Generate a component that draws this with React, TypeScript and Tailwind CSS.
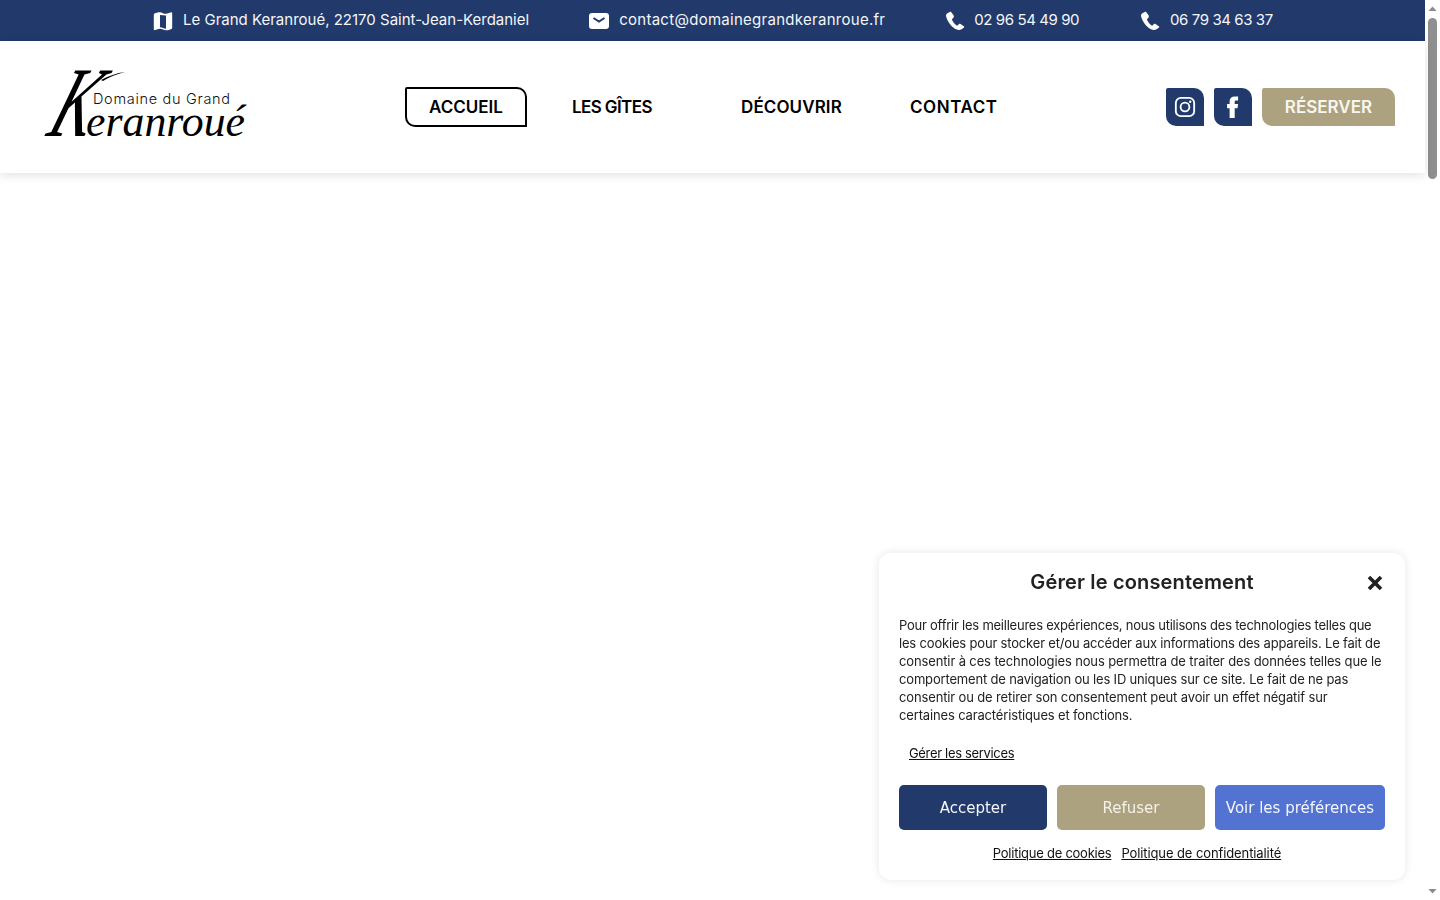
const sans = "font-['Inter','Liberation_Sans',sans-serif]";

function MapIcon() {
  return (
    <svg width="20" height="20" viewBox="0 0 20 20" fill="#fff" className="shrink-0">
      <path fillRule="evenodd" d="M1.500 2.600C3.500 1.600 5.500 1 7 1.200c2 .3 4 1.800 6 1.600 2-.2 3.500-1 5-1.500.600-.2 1.200.2 1.200.9v14.600c0 .6-.3 1-.8 1.200-1.900.9-3.900 1.500-5.400 1.300-2-.3-4-1.700-6-1.600-1.800.1-3.400.9-5 1.400-.6.200-1.200-.2-1.200-.9V3.700c0-.5.2-.9.700-1.100zM7 4v12.300c2 .2 4 1.200 6 1.500V4.600C11 4.400 9 4 7 4z" />
    </svg>
  );
}

function MailIcon() {
  return (
    <svg width="20" height="16" viewBox="0 0 20 16" className="shrink-0">
      <rect x="0" y="0" width="20" height="16" rx="3" fill="#fff" />
      <path d="M4.500 5l5.500 3.600L15.500 5" fill="none" stroke="#213a6b" strokeWidth="2" />
    </svg>
  );
}

function PhoneIcon() {
  return (
    <svg width="20" height="20" viewBox="0 0 20 20" fill="#fff" className="shrink-0">
      <path d="M4.800 1 2 2.600C1 3.300.8 4.600 1.300 6.300c1.100 3.400 3 6.500 5.500 9 1.800 1.700 4.300 3.400 6.800 3.700 2 .2 3.500-.8 5.400-2.500.4-.5.200-1-.2-1.300l-3.300-2.300c-.6-.4-1.100-.3-1.600.2l-1 1.200c-.4.300-.8.400-1.300.1-2.100-1.400-3.500-3.300-4.500-5.500-.2-.5-.1-.8.300-1.100l1.100-1C8.900 5.400 9 5 8.700 4.400L6.300 1.300C5.900.800 5.300.7 4.800 1z" />
    </svg>
  );
}

function TopItem({ icon, text, cls }: { icon: React.ReactNode; text: string; cls: string }) {
  return (
    <div className={`flex items-center ${cls}`}>
      {icon}
      <span className="whitespace-nowrap text-[15px] text-[#f4f6fa]">{text}</span>
    </div>
  );
}

function Logo() {
  return (
    <svg width="200" height="72" viewBox="0 0 200 72" className="shrink-0 overflow-visible">
      <text transform="translate(0 65) skewX(-20) scale(0.62 1)" fontFamily="'Liberation Serif', serif" fontStyle="italic" fontSize="100" fill="#000">K</text>
      <path d="M56 9C63 5 72 2 80 1 72 3 64 6 58 10z" fill="#000" />
      <text x="48" y="33" fontFamily="Inter, 'Liberation Sans', sans-serif" fontWeight="300" fontSize="14.500" fill="#111" textLength="137">Domaine du Grand</text>
      <text x="41" y="65" fontFamily="'Liberation Serif', serif" fontStyle="italic" fontSize="45" fill="#000" textLength="159" lengthAdjust="spacingAndGlyphs">eranroué</text>
    </svg>
  );
}

function InstagramIcon() {
  return (
    <svg width="22" height="22" viewBox="0 0 24 24" fill="none" stroke="#fff">
      <rect x="2" y="2" width="20" height="20" rx="5.500" strokeWidth="2" />
      <circle cx="12" cy="12" r="4.800" strokeWidth="2" />
      <circle cx="17.700" cy="6.300" r="1.300" fill="#fff" stroke="none" />
    </svg>
  );
}

function FacebookIcon() {
  return (
    <svg width="12" height="22" viewBox="0 0 14 26" fill="#fff">
      <path d="M3 26V14.500H0V9.500H3V6.200C3 2.400 5.500.5 9 .5c1.500 0 3 .1 4 .2v4.500h-2.500C9.300 5.200 9 6 9 7v2.500h4l-.7 5H9V26z" />
    </svg>
  );
}

function Scrollbar() {
  return (
    <div className="flex h-[900px] w-[15px] shrink-0 flex-col items-center bg-white">
      <svg width="15" height="18" viewBox="0 0 15 18" className="shrink-0">
        <path d="M3.500 11L7.500 6.500 11.500 11z" fill="#8a8a8a" />
      </svg>
      <div className="h-[161px] w-[9px] shrink-0 rounded-[5px] bg-[#8f8f8f]" />
      <div className="flex-1" />
      <svg width="15" height="18" viewBox="0 0 15 18" className="shrink-0">
        <path d="M3.500 7L7.500 11.500 11.500 7z" fill="#8a8a8a" />
      </svg>
    </div>
  );
}

function ConsentButton({ label, cls }: { label: string; cls: string }) {
  return (
    <button className={`flex h-[45px] items-center justify-center rounded-[5px] pt-[2px] font-['DejaVu_Sans',sans-serif] text-[15px] ${cls}`}>
      {label}
    </button>
  );
}

function Consent() {
  return (
    <div className={`${sans} fixed bottom-[20px] left-[879px] flex h-[327px] w-[526px] flex-col rounded-[12px] bg-white px-[20px] shadow-[0_0_10px_rgba(0,0,0,0.1)]`}>
      <div className="relative flex h-[60px] shrink-0 items-center justify-center pb-[2px]">
        <span className="text-[20px] font-semibold tracking-[0.15px] text-[#222]">Gérer le consentement</span>
        <svg width="16" height="16" viewBox="0 0 16 16" className="absolute right-[2px] top-[22px]">
          <path d="M2 2l12 12M14 2L2 14" stroke="#222" strokeWidth="3.600" />
        </svg>
      </div>
      <div className="mt-[3px] shrink-0 whitespace-nowrap text-[13px] leading-[18px] text-[#222]">
        <p className="tracking-[-0.24px]">Pour offrir les meilleures expériences, nous utilisons des technologies telles que</p>
        <p className="tracking-[-0.18px]">les cookies pour stocker et/ou accéder aux informations des appareils. Le fait de</p>
        <p className="tracking-[-0.13px]">consentir à ces technologies nous permettra de traiter des données telles que le</p>
        <p className="tracking-[-0.17px]">comportement de navigation ou les ID uniques sur ce site. Le fait de ne pas</p>
        <p className="tracking-[-0.14px]">consentir ou de retirer son consentement peut avoir un effet négatif sur</p>
        <p className="tracking-[-0.15px]">certaines caractéristiques et fonctions.</p>
      </div>
      <a className="ml-[10px] mt-[20px] shrink-0 self-start text-[13px] leading-[18px] tracking-[-0.33px] text-[#111] underline">Gérer les services</a>
      <div className="mt-[23px] grid shrink-0 grid-cols-[148px_148px_170px] gap-[10px]">
        <ConsentButton label="Accepter" cls="bg-[#213a6b] text-[#f4f6fa]" />
        <ConsentButton label="Refuser" cls="bg-[#ada27f] text-[#f4f1e8]" />
        <ConsentButton label="Voir les préférences" cls="bg-[#5273d2] text-[#f4f6fa]" />
      </div>
      <div className="mt-[14px] flex shrink-0 justify-center gap-[10px] pr-[10px] text-[13px] leading-[18px] text-[#111]">
        <a className="tracking-[-0.25px] underline">Politique de cookies</a>
        <a className="tracking-[-0.1px] underline">Politique de confidentialité</a>
      </div>
    </div>
  );
}

const corners = "rounded-tr-[10px] rounded-bl-[10px] rounded-tl-[2px] rounded-br-none";

export default function App() {
  return (
    <div className={`${sans} flex h-[900px] w-[1440px] overflow-hidden bg-white`}>
      <div className="flex min-w-0 flex-1 flex-col">
        <div className="flex h-[41px] shrink-0 items-center bg-[#213a6b] pl-[153px]">
          <TopItem icon={<MapIcon />} text="Le Grand Keranroué, 22170 Saint-Jean-Kerdaniel" cls="gap-[10px] tracking-[0px]" />
          <div className="ml-[60px]"><TopItem icon={<MailIcon />} text="contact@domainegrandkeranroue.fr" cls="gap-[10px] tracking-[0.28px]" /></div>
          <div className="ml-[60px]"><TopItem icon={<PhoneIcon />} text="02 96 54 49 90" cls="gap-[9px] tracking-[-0.42px]" /></div>
          <div className="ml-[61px]"><TopItem icon={<PhoneIcon />} text="06 79 34 63 37" cls="gap-[10px] tracking-[-0.42px]" /></div>
        </div>
        <header className="relative z-10 flex h-[132px] shrink-0 items-center bg-white pl-[45px] pr-[30px] shadow-[0_2px_10px_rgba(0,0,0,0.12)]">
          <Logo />
          <nav className="ml-[160px] flex items-center text-[17px] font-semibold text-black">
            <a className={`flex h-[40px] w-[122px] items-center justify-center border-2 border-black pt-[2px] ${corners}`}>ACCUEIL</a>
            <a className="ml-[45px] w-[81px] whitespace-nowrap pt-[2px] tracking-[-0.6px]">LES GÎTES</a>
            <a className="ml-[88px] w-[102px] whitespace-nowrap pt-[2px] tracking-[0.1px]">DÉCOUVRIR</a>
            <a className="ml-[67px] whitespace-nowrap pt-[2px] tracking-[0.55px]">CONTACT</a>
          </nav>
          <div className="ml-auto flex items-center gap-[10px]">
            <a className={`flex h-[38px] w-[38px] items-center justify-center bg-[#213a6b] ${corners}`}><InstagramIcon /></a>
            <a className={`flex h-[38px] w-[38px] items-center justify-center bg-[#213a6b] ${corners}`}><FacebookIcon /></a>
            <a className={`flex h-[38px] w-[133px] items-center justify-center bg-[#ada27f] pt-[2px] text-[17px] font-semibold text-[#f8f6f0] ${corners}`}>RÉSERVER</a>
          </div>
        </header>
        <div className="flex-1" />
      </div>
      <Scrollbar />
      <Consent />
    </div>
  );
}
